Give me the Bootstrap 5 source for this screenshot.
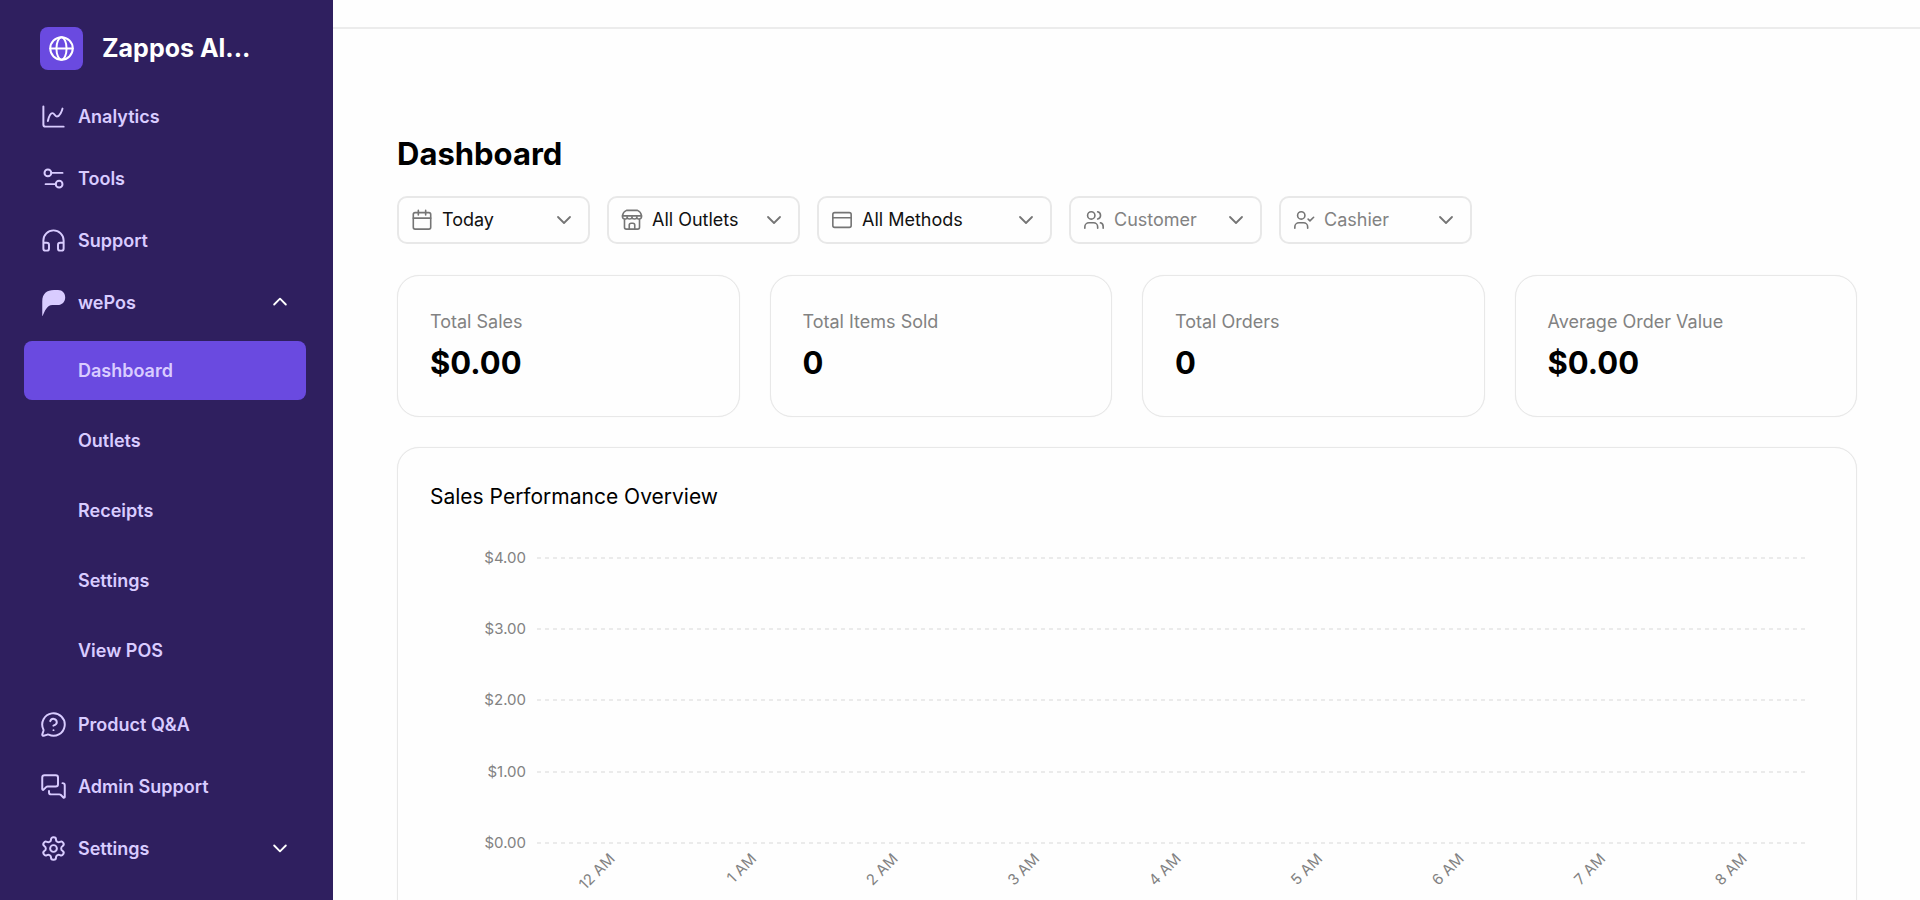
<!DOCTYPE html>
<html lang="en">
<head>
<meta charset="utf-8">
<meta name="viewport" content="width=device-width, initial-scale=1">
<title>Dashboard</title>
<link href="https://cdn.jsdelivr.net/npm/bootstrap@5.3.0/dist/css/bootstrap.min.css" rel="stylesheet">
<style>
  :root { --ink: #2f1f5f; --accent: #6a4ae0; --lilac: #d9ccff; --line: #e8e8e8; --muted: #828282; }
  body { font-family: Inter, "Liberation Sans", sans-serif; font-size: 18px; line-height: 24px; color: #0a0a0a; background: #fefefe; }
  svg.ico { fill: none; stroke: currentColor; stroke-width: 1.75; stroke-linecap: round; stroke-linejoin: round; flex: none; }
  .sidebar { width: 333px; flex: none; background: var(--ink); padding-left: 24px; padding-right: 27px; }
  .brand { height: 86px; padding: 27px 16px 0; }
  .brand-tile { width: 43px; height: 43px; border-radius: 8px; background: var(--accent); color: #fff; }
  .brand-name { font-size: 25px; line-height: 43px; font-weight: 700; color: #fff; margin-left: 19px; }
  .side-link { display: flex; align-items: center; gap: 11px; height: 62px; padding: 0 16px; color: var(--lilac); font-weight: 600; text-decoration: none; border-radius: 8px; width: 100%; background: none; border: 0; text-align: left; }
  .side-link:hover { color: #fff; }
  .side-link .ico { width: 27px; height: 27px; margin-bottom: 2px; }
  .side-link .chev { width: 20px; height: 20px; color: #fff; stroke-width: 2.25; }
  .submenu { margin: 7px 0 14px; gap: 11px; }
  .submenu .side-link { height: 59px; padding-left: 54px; }
  .submenu .side-link.active { background: var(--accent); }
  .workspace { overflow-y: auto; scrollbar-width: none; }
  .workspace::-webkit-scrollbar { display: none; }
  .topbar { height: 29px; border-bottom: 2px solid #ececec; }
  .content { padding: 105px 63px 48px 64px; }
  .page-title { font-size: 31px; line-height: 40px; font-weight: 700; margin: 0 0 22px; color: #000; }
  .filters { gap: 17px; }
  .filter { width: 193px; color: #757575; }
  .filter.wide { width: 235px; }
  .filter .ico { position: absolute; left: 14px; top: 13px; width: 22px; height: 22px; pointer-events: none; }
  .filter .form-select { height: 48px; padding: 0 44px 0 43px; font-size: 18px; line-height: 24px; color: #111; border: 2px solid var(--line); border-radius: 10px; background-color: transparent;
    background-image: url("data:image/svg+xml,%3Csvg xmlns='http://www.w3.org/2000/svg' viewBox='0 0 20 20' fill='none' stroke='%23757575' stroke-width='1.8' stroke-linecap='round' stroke-linejoin='round'%3E%3Cpath d='M4 7l6 6 6-6'/%3E%3C/svg%3E"); background-size: 20px 20px; background-position: right 14px center; }
  .filter .form-select.unset { color: var(--muted); }
  .stats { display: grid; grid-template-columns: repeat(4, 1fr); gap: 30px; margin: 31px 0 30px; }
  .panel { border: 1px solid var(--line); border-radius: 22px; padding: 33px 32px; background: #fefefe; box-shadow: 0 0 1px var(--line); }
  .stat { height: 142px; }
  .stat-label { color: var(--muted); line-height: 26px; }
  .stat-value { font-size: 31px; line-height: 40px; font-weight: 700; color: #000; margin-top: 8px; }
  .chart-title { font-size: 21px; line-height: 32px; font-weight: 400; margin: 0; color: #000; }
  .chart { display: block; margin: 45px 0 0 107px; width: calc(100% - 125px); height: 380px; overflow: visible; }
  .chart line { stroke: #e5e5e5; stroke-width: 1.5; stroke-dasharray: 4 4; }
  .chart text { fill: var(--muted); font-size: 15px; text-anchor: end; }
  .chart svg { overflow: visible; }
</style>
</head>
<body>
<div class="d-flex vh-100 overflow-hidden">
  <nav class="sidebar d-flex flex-column" aria-label="Main">
    <div class="brand d-flex">
      <span class="brand-tile d-flex align-items-center justify-content-center">
        <svg class="ico" width="27" height="27" viewBox="0 0 24 24" aria-hidden="true"><circle cx="12" cy="12" r="10"/><ellipse cx="12" cy="12" rx="4.5" ry="10"/><path d="M2 12h20"/></svg>
      </span>
      <span class="brand-name text-nowrap">Zappos Al...</span>
    </div>
    <a class="side-link" href="#"><svg class="ico" viewBox="0 0 24 24" aria-hidden="true"><path d="M3 3v16a2 2 0 0 0 2 2h16"/><path d="M7 16c.5-2 1.5-7 4-7 2 0 2 3 4 3 2.500 0 4.500-5 5-7"/></svg>Analytics</a>
    <a class="side-link" href="#"><svg class="ico" viewBox="0 0 24 24" aria-hidden="true"><path d="M20 7h-9M14 17H5"/><circle cx="17" cy="17" r="3"/><circle cx="7" cy="7" r="3"/></svg>Tools</a>
    <a class="side-link" href="#"><svg class="ico" viewBox="0 0 24 24" aria-hidden="true"><path d="M3 14h3a2 2 0 0 1 2 2v3a2 2 0 0 1-2 2H5a2 2 0 0 1-2-2v-7a9 9 0 0 1 18 0v7a2 2 0 0 1-2 2h-1a2 2 0 0 1-2-2v-3a2 2 0 0 1 2-2h3"/></svg>Support</a>
    <button class="side-link" type="button" aria-expanded="true"><svg class="ico" viewBox="0 0 24 24" aria-hidden="true"><path fill="currentColor" stroke="none" d="M2 24.500V11C2 4 6 .8 12.500.8h3.500c4 0 6.400 3 6.400 6.700 0 4-2.800 6.700-6.800 6.700H11C6 14.200 4.200 20 2 24.500z"/></svg>wePos<svg class="ico chev ms-auto" viewBox="0 0 24 24" aria-hidden="true"><path d="m5 15 7-7 7 7"/></svg></button>
    <div class="submenu d-flex flex-column">
      <a class="side-link active" href="#" aria-current="page">Dashboard</a>
      <a class="side-link" href="#">Outlets</a>
      <a class="side-link" href="#">Receipts</a>
      <a class="side-link" href="#">Settings</a>
      <a class="side-link" href="#">View POS</a>
    </div>
    <a class="side-link" href="#"><svg class="ico" viewBox="0 0 24 24" aria-hidden="true"><path d="M2.992 16.342a2 2 0 0 1 .094 1.167l-1.065 3.290a1 1 0 0 0 1.236 1.168l3.413-.998a2 2 0 0 1 1.099.092 10 10 0 1 0-4.777-4.719"/><path d="M9.090 9a3 3 0 0 1 5.830 1c0 2-3 3-3 3M12 17h.01"/></svg>Product Q&amp;A</a>
    <a class="side-link" href="#"><svg class="ico" viewBox="0 0 24 24" aria-hidden="true"><path d="M16 10a2 2 0 0 1-2 2H6.828a2 2 0 0 0-1.414.586l-2.202 2.202A.71.71 0 0 1 2 14.286V4a2 2 0 0 1 2-2h10a2 2 0 0 1 2 2z"/><path d="M20 9a2 2 0 0 1 2 2v10.286a.71.71 0 0 1-1.212.502l-2.202-2.202A2 2 0 0 0 17.172 19H10a2 2 0 0 1-2-2v-1"/></svg>Admin Support</a>
    <button class="side-link" type="button" aria-expanded="false"><svg class="ico" viewBox="0 0 24 24" aria-hidden="true"><path d="M12.220 2h-.44a2 2 0 0 0-2 2v.18a2 2 0 0 1-1 1.730l-.43.250a2 2 0 0 1-2 0l-.15-.08a2 2 0 0 0-2.730.730l-.220.380a2 2 0 0 0 .730 2.730l.15.1a2 2 0 0 1 1 1.720v.51a2 2 0 0 1-1 1.740l-.15.09a2 2 0 0 0-.73 2.730l.220.380a2 2 0 0 0 2.730.730l.15-.08a2 2 0 0 1 2 0l.43.250a2 2 0 0 1 1 1.730V20a2 2 0 0 0 2 2h.44a2 2 0 0 0 2-2v-.18a2 2 0 0 1 1-1.730l.43-.25a2 2 0 0 1 2 0l.15.08a2 2 0 0 0 2.730-.730l.220-.39a2 2 0 0 0-.730-2.730l-.15-.08a2 2 0 0 1-1-1.740v-.5a2 2 0 0 1 1-1.740l.15-.09a2 2 0 0 0 .730-2.730l-.220-.380a2 2 0 0 0-2.730-.730l-.15.08a2 2 0 0 1-2 0l-.43-.25a2 2 0 0 1-1-1.730V4a2 2 0 0 0-2-2z"/><circle cx="12" cy="12" r="3"/></svg>Settings<svg class="ico chev ms-auto" viewBox="0 0 24 24" aria-hidden="true"><path d="m5 9 7 7 7-7"/></svg></button>
  </nav>

  <div class="workspace flex-grow-1">
    <header class="topbar"></header>
    <main class="content">
      <h1 class="page-title">Dashboard</h1>
      <form class="filters d-flex flex-wrap">
        <div class="filter position-relative">
          <svg class="ico" viewBox="0 0 24 24" aria-hidden="true"><rect x="2.500" y="4" width="19" height="18" rx="2"/><path d="M8 1.500v5M16 1.500v5M2.500 10h19"/></svg>
          <select class="form-select" aria-label="Period"><option>Today</option></select>
        </div>
        <div class="filter position-relative">
          <svg class="ico" viewBox="0 0 24 24" aria-hidden="true"><path d="M6 1.500h12c2.500 1 4 3.300 4.500 6h-21C2 4.800 3.500 2.500 6 1.500zM1.500 7.500c0 4.300 5.200 4.300 5.200 1.500 0 2.500 5.300 2.500 5.300 0 0 2.500 5.300 2.500 5.300 0 0 2.800 5.200 2.800 5.200-1.500M3.800 11.500V20a2 2 0 0 0 2 2h12.400a2 2 0 0 0 2-2v-8.500M9 22v-4.500a2 2 0 0 1 2-2h2a2 2 0 0 1 2 2V22"/></svg>
          <select class="form-select" aria-label="Outlet"><option>All Outlets</option></select>
        </div>
        <div class="filter wide position-relative">
          <svg class="ico" viewBox="0 0 24 24" aria-hidden="true"><rect x="2" y="4" width="20" height="16" rx="2"/><path d="M2 9.500h20"/></svg>
          <select class="form-select" aria-label="Payment method"><option>All Methods</option></select>
        </div>
        <div class="filter position-relative">
          <svg class="ico" viewBox="0 0 24 24" aria-hidden="true"><circle cx="9" cy="7" r="4"/><path d="M2 21v-1.500A4.500 4.500 0 0 1 6.500 15h5a4.500 4.500 0 0 1 4.500 4.500V21M16 3.100a4 4 0 0 1 0 7.800M22 21v-2a4 4 0 0 0-3-3.900"/></svg>
          <select class="form-select unset" aria-label="Customer"><option>Customer</option></select>
        </div>
        <div class="filter position-relative">
          <svg class="ico" viewBox="0 0 24 24" aria-hidden="true"><circle cx="9" cy="7" r="4"/><path d="M2 21v-1.500A4.500 4.500 0 0 1 6.500 15h5a4.500 4.500 0 0 1 4.500 4.500V21M16.500 11l2 2 4-4"/></svg>
          <select class="form-select unset" aria-label="Cashier"><option>Cashier</option></select>
        </div>
      </form>

      <section class="stats" aria-label="Totals">
        <div class="panel stat"><div class="stat-label">Total Sales</div><div class="stat-value">$0.00</div></div>
        <div class="panel stat"><div class="stat-label">Total Items Sold</div><div class="stat-value">0</div></div>
        <div class="panel stat"><div class="stat-label">Total Orders</div><div class="stat-value">0</div></div>
        <div class="panel stat"><div class="stat-label">Average Order Value</div><div class="stat-value">$0.00</div></div>
      </section>

      <section class="panel">
        <h2 class="chart-title">Sales Performance Overview</h2>
        <svg class="chart" role="img" aria-label="Sales by hour">
          <line x1="0" x2="100%" y1="0" y2="0"/><text x="-11" y="5">$4.00</text>
          <line x1="0" x2="100%" y1="71" y2="71"/><text x="-11" y="76">$3.00</text>
          <line x1="0" x2="100%" y1="142" y2="142"/><text x="-11" y="147">$2.00</text>
          <line x1="0" x2="100%" y1="214" y2="214"/><text x="-11" y="219">$1.00</text>
          <line x1="0" x2="100%" y1="285" y2="285"/><text x="-11" y="290">$0.00</text>
          <svg x="5.6%" y="294"><text transform="rotate(-45)" dy="11">12 AM</text></svg>
          <svg x="16.75%" y="294"><text transform="rotate(-45)" dy="11">1 AM</text></svg>
          <svg x="27.9%" y="294"><text transform="rotate(-45)" dy="11">2 AM</text></svg>
          <svg x="39.05%" y="294"><text transform="rotate(-45)" dy="11">3 AM</text></svg>
          <svg x="50.2%" y="294"><text transform="rotate(-45)" dy="11">4 AM</text></svg>
          <svg x="61.35%" y="294"><text transform="rotate(-45)" dy="11">5 AM</text></svg>
          <svg x="72.5%" y="294"><text transform="rotate(-45)" dy="11">6 AM</text></svg>
          <svg x="83.65%" y="294"><text transform="rotate(-45)" dy="11">7 AM</text></svg>
          <svg x="94.8%" y="294"><text transform="rotate(-45)" dy="11">8 AM</text></svg>
        </svg>
      </section>
    </main>
  </div>
</div>
<script src="https://cdn.jsdelivr.net/npm/bootstrap@5.3.0/dist/js/bootstrap.bundle.min.js"></script>
</body>
</html>
